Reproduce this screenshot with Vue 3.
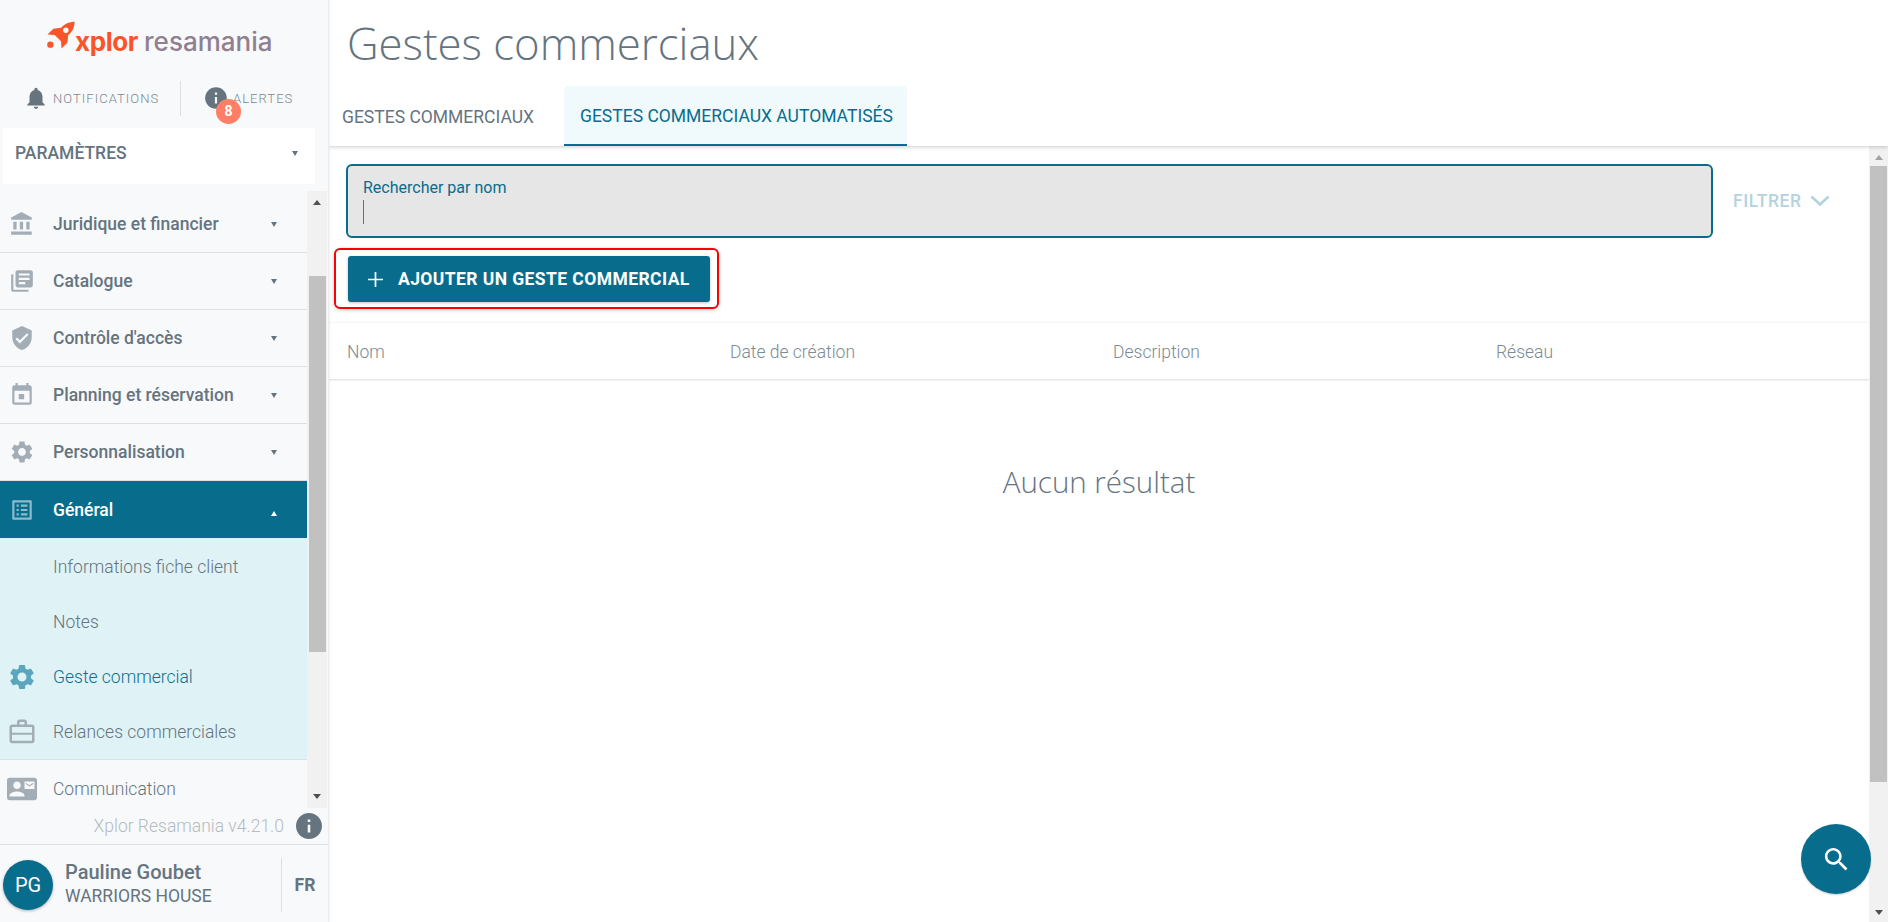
<script setup>
const icons = {
  bank: 'M4 10v7h3v-7H4zm6 0v7h3v-7h-3zM2 22h19v-3H2v3zm14-12v7h3v-7h-3zm-4.5-9L2 6v2h19V6l-9.5-5z',
  books: 'M4 6H2v14c0 1.1.9 2 2 2h14v-2H4V6zm16-4H8c-1.1 0-2 .9-2 2v12c0 1.1.9 2 2 2h12c1.1 0 2-.9 2-2V4c0-1.1-.9-2-2-2zm-1 9H9V9h10v2zm-4 4H9v-2h6v2zm4-8H9V5h10v2z',
  shield: 'M12 1L3 5v6c0 5.55 3.84 10.74 9 12 5.16-1.26 9-6.45 9-12V5l-9-4zm-2 16l-4-4 1.41-1.41L10 14.17l6.59-6.59L18 9l-8 8z',
  event: 'M14 11H9v5h5v-5zM16 1v2H8V1H6v2H5c-1.11 0-1.99.9-1.99 2L3 19c0 1.1.89 2 2 2h14c1.1 0 2-.9 2-2V5c0-1.1-.9-2-2-2h-1V1h-2zm3 18H5V8h14v11z',
  gear: 'M19.14,12.94c0.04-0.3,0.06-0.61,0.06-0.94c0-0.32-0.02-0.64-0.07-0.94l2.03-1.58c0.18-0.14,0.23-0.41,0.12-0.61 l-1.92-3.32c-0.12-0.22-0.37-0.29-0.59-0.22l-2.39,0.96c-0.5-0.38-1.03-0.7-1.62-0.94L14.4,2.81c-0.04-0.24-0.24-0.41-0.48-0.41 h-3.84c-0.24,0-0.43,0.17-0.47,0.41L9.25,5.35C8.66,5.59,8.12,5.92,7.63,6.29L5.24,5.33c-0.22-0.08-0.47,0-0.59,0.22L2.74,8.87 C2.62,9.08,2.66,9.34,2.86,9.48l2.03,1.58C4.84,11.36,4.8,11.69,4.8,12s0.02,0.64,0.07,0.94l-2.03,1.58 c-0.18,0.14-0.23,0.41-0.12,0.61l1.92,3.32c0.12,0.22,0.37,0.29,0.59,0.22l2.39-0.96c0.5,0.38,1.03,0.7,1.62,0.94l0.36,2.54 c0.05,0.24,0.24,0.41,0.48,0.41h3.84c0.24,0,0.44-0.17,0.47-0.41l0.36-2.54c0.59-0.24,1.13-0.56,1.62-0.94l2.39,0.96 c0.22,0.08,0.47,0,0.59-0.22l1.92-3.32c0.12-0.22,0.07-0.47-0.12-0.61L19.14,12.94z M12,15.6c-1.98,0-3.6-1.62-3.6-3.6 s1.62-3.6,3.6-3.6s3.6,1.62,3.6,3.6S13.98,15.6,12,15.6z',
  list: 'M19 5v14H5V5h14m1.1-2H3.9c-.5 0-.9.4-.9.9v16.2c0 .4.4.9.9.9h16.2c.4 0 .9-.5.9-.9V3.9c0-.5-.5-.9-.9-.9zM11 7h6v2h-6V7zm0 4h6v2h-6v-2zm0 4h6v2h-6zM7 7h2v2H7zm0 4h2v2H7zm0 4h2v2H7z',
  work: 'M14 6V4h-4v2h4zM4 8v11h16V8H4zm16-2c1.11 0 2 .89 2 2v11c0 1.11-.89 2-2 2H4c-1.11 0-2-.89-2-2l.01-11c0-1.11.88-2 1.99-2h4V4c0-1.11.89-2 2-2h4c1.11 0 2 .89 2 2v2h4zM3 12.6h18v1.6H3z',
  contact: 'M21 8V7l-3 2-3-2v1l3 2 3-2zm1-5H2C.9 3 0 3.9 0 5v14c0 1.1.9 2 2 2h20c1.1 0 1.99-.9 1.99-2L24 5c0-1.1-.9-2-2-2zM8 6c1.66 0 3 1.34 3 3s-1.34 3-3 3-3-1.34-3-3 1.34-3 3-3zm6 12H2v-1c0-2 4-3.1 6-3.1s6 1.1 6 3.1v1zm8-6h-8V6h8v6z',
  bell: 'M12 22c1.1 0 2-.9 2-2h-4c0 1.1.89 2 2 2zm6-6v-5c0-3.07-1.64-5.64-4.5-6.32V4c0-.83-.67-1.5-1.5-1.5s-1.5.67-1.5 1.5v.68C7.63 5.36 6 7.92 6 11v5l-2 2v1h16v-1l-2-2z',
  info: 'M12 2C6.48 2 2 6.48 2 12s4.48 10 10 10 10-4.48 10-10S17.52 2 12 2zm1 15h-2v-6h2v6zm0-8h-2V7h2v2z',
  search: 'M15.5 14h-.79l-.28-.27C15.41 12.59 16 11.11 16 9.5 16 5.91 13.09 3 9.5 3S3 5.91 3 9.5 5.91 16 9.5 16c1.61 0 3.09-.59 4.23-1.57l.27.28v.79l5 4.99L20.49 19l-4.99-5zm-6 0C7.01 14 5 11.99 5 9.5S7.01 5 9.5 5 14 7.01 14 9.5 11.99 14 9.5 14z'
}
const groups = [
  { label: 'Juridique et financier', icon: 'bank' },
  { label: 'Catalogue', icon: 'books' },
  { label: "Contrôle d'accès", icon: 'shield' },
  { label: 'Planning et réservation', icon: 'event' },
  { label: 'Personnalisation', icon: 'gear' }
]
const subItems = [
  { label: 'Informations fiche client' },
  { label: 'Notes' },
  { label: 'Geste commercial', icon: 'gear', current: true },
  { label: 'Relances commerciales', icon: 'work' }
]
const columns = ['Nom', 'Date de création', 'Description', 'Réseau']
</script>

<template>
  <div class="page">
    <aside class="sidebar">
      <div class="logo">
        <svg class="rocket" viewBox="0 0 30 30" width="29" height="29">
          <path fill="#fa5429" d="M28.5 0.5 C23 1 18 3 14.5 7 L6.5 8 L0.5 14 L8 14.5 L14.5 21 L15 28.5 L21 22.5 L22 14.5 C26.5 11 28.5 6 28.5 0.5 Z" />
          <circle cx="19.5" cy="9.5" r="2.8" fill="#f8f9fb" />
          <circle cx="3.5" cy="24.5" r="3.3" fill="#fa5429" />
        </svg>
        <span class="logo-x">xplor</span>
        <span class="logo-r">resamania</span>
      </div>

      <div class="alerts">
        <div class="alert-item notif">
          <svg class="a-icon" viewBox="0 0 24 24" width="26" height="26"><path :d="icons.bell" /></svg>
          <span>NOTIFICATIONS</span>
        </div>
        <div class="alert-item alertes">
          <svg class="a-icon" viewBox="0 0 24 24" width="26" height="26"><path :d="icons.info" /></svg>
          <span>ALERTES</span>
          <b class="badge">8</b>
        </div>
      </div>

      <div class="select">
        <span>PARAMÈTRES</span>
        <i class="caret down"></i>
      </div>

      <div class="menu-wrap">
        <nav class="menu">
          <div v-for="g in groups" :key="g.label" class="row">
            <span class="icon-cell"><svg viewBox="0 0 24 24" width="26" height="26"><path :d="icons[g.icon]" /></svg></span>
            <span class="row-label">{{ g.label }}</span>
            <i class="caret down"></i>
          </div>
          <div class="row active">
            <span class="icon-cell"><svg viewBox="0 0 24 24" width="26" height="26"><path :d="icons.list" /></svg></span>
            <span class="row-label">Général</span>
            <i class="caret up"></i>
          </div>
          <div class="sub">
            <div v-for="s in subItems" :key="s.label" class="sub-row" :class="{ current: s.current }">
              <span class="icon-cell"><svg v-if="s.icon" viewBox="0 0 24 24" width="30" height="30"><path :d="icons[s.icon]" /></svg></span>
              <span>{{ s.label }}</span>
            </div>
          </div>
          <div class="sub-row comm">
            <span class="icon-cell"><svg viewBox="0 0 24 24" width="30" height="30"><path :d="icons.contact" /></svg></span>
            <span>Communication</span>
          </div>
        </nav>
        <div class="scrollbar side-bar">
          <i class="arrow up"></i>
          <div class="thumb"></div>
          <i class="arrow dn"></i>
        </div>
      </div>

      <div class="version">
        <span>Xplor Resamania v4.21.0</span>
        <svg viewBox="2 2 20 20" width="26" height="26"><path :d="icons.info" /></svg>
      </div>

      <div class="user">
        <div class="avatar">PG</div>
        <div class="who">
          <strong>Pauline Goubet</strong>
          <span>WARRIORS HOUSE</span>
        </div>
        <div class="lang">FR</div>
      </div>
    </aside>

    <main class="main">
      <header class="head">
        <h1>Gestes commerciaux</h1>
        <div class="tabs">
          <div class="tab">GESTES COMMERCIAUX</div>
          <div class="tab selected">GESTES COMMERCIAUX AUTOMATISÉS</div>
        </div>
      </header>

      <div class="body">
        <div class="content">
          <div class="filters">
            <div class="search">
              <label>Rechercher par nom</label>
              <i class="text-caret"></i>
            </div>
            <div class="filter-btn">
              <span>FILTRER</span>
              <svg viewBox="0 0 20 12" width="20" height="12"><path d="M1.5 1.5 L10 9.5 L18.5 1.5" fill="none" stroke="currentColor" stroke-width="2.6" /></svg>
            </div>
          </div>
          <div class="add-wrap">
            <div class="outline">
              <button class="add">
                <svg viewBox="0 0 15 15" width="15" height="15"><path d="M7.5 0v15M0 7.5h15" stroke="#fff" stroke-width="1.7" /></svg>
                <span>AJOUTER UN GESTE COMMERCIAL</span>
              </button>
            </div>
          </div>
          <div class="thead">
            <div v-for="c in columns" :key="c" class="th">{{ c }}</div>
          </div>
          <p class="empty">Aucun résultat</p>
        </div>
        <div class="scrollbar main-bar">
          <i class="arrow up"></i>
          <div class="thumb"></div>
          <i class="arrow dn"></i>
        </div>
        <button class="fab">
          <svg viewBox="0 0 24 24" width="31" height="31"><path :d="icons.search" fill="#fff" /></svg>
        </button>
      </div>
    </main>
  </div>
</template>

<style>
html, body { margin: 0; height: 100%; overflow: hidden; background: #fff; }
</style>

<style scoped>
.page {
  display: flex;
  width: 1888px;
  height: 922px;
  overflow: hidden;
  font-family: Roboto, "Liberation Sans", sans-serif;
  color: #65747f;
}
.sidebar {
  width: 329px;
  flex: none;
  display: flex;
  flex-direction: column;
  background: #f8f9fb;
  border-right: 1px solid #ececec;
  box-sizing: border-box;
  box-shadow: 1px 0 2px rgba(0, 0, 0, .06);
  position: relative;
  z-index: 2;
}
.logo {
  height: 70px;
  display: flex;
  align-items: center;
  padding: 0 0 0 47px;
  box-sizing: border-box;
  font-family: Inter, "Open Sans", sans-serif;
  font-size: 26px;
}
.rocket { flex: none; }
.logo-x { color: #fa5429; font-weight: 700; margin-left: -1px; margin-top: 12px; letter-spacing: -.4px; }
.logo-r { color: #907f90; font-weight: 500; margin-left: 6px; margin-top: 12px; }
.alerts { height: 58px; display: flex; align-items: center; padding-bottom: 2px; box-sizing: border-box; }
.alert-item { display: flex; align-items: center; font-size: 13px; letter-spacing: 1.05px; color: #7c8992; font-weight: 300; height: 35px; position: relative; }
.a-icon { fill: #65747f; flex: none; }
.notif { width: 181px; padding-left: 23px; box-sizing: border-box; gap: 4px; border-right: 1px solid #dcdfe3; }
.alertes { padding-left: 22px; gap: 4px; }
.badge {
  position: absolute;
  left: 35px;
  top: 18px;
  width: 25px;
  height: 25px;
  border-radius: 50%;
  background: #ff7f66;
  color: #fff;
  font-size: 14px;
  font-weight: 700;
  letter-spacing: 0;
  display: flex;
  align-items: center;
  justify-content: center;
}
.select {
  margin: 0 13px 0 3px;
  height: 56px;
  background: #fff;
  display: flex;
  align-items: center;
  justify-content: space-between;
  padding: 0 17px 6px 12px;
  box-sizing: border-box;
  font-size: 17.5px;
  font-weight: 500;
}
.caret { width: 0; height: 0; border-left: 3.5px solid transparent; border-right: 3.5px solid transparent; display: block; flex: none; }
.caret.down { border-top: 5px solid #65747f; }
.caret.up { border-bottom: 5px solid #fff; margin-top: 7px; }
.menu-wrap { height: 617px; margin-top: 7px; display: flex; overflow: hidden; }
.menu { width: 307px; flex: none; padding-top: 5px; box-sizing: border-box; overflow: hidden; }
.row {
  height: 57px;
  display: flex;
  align-items: center;
  padding-right: 30px;
  box-sizing: border-box;
  border-bottom: 1px solid #dcdfe3;
  font-size: 17.5px;
  font-weight: 500;
}
.row-label { flex: 1; }
.icon-cell { width: 53px; flex: none; display: flex; justify-content: center; padding-right: 10px; box-sizing: border-box; }
.icon-cell svg { fill: #a2adb5; display: block; }
.row.active { background: #086d8d; color: #fff; border-bottom: none; }
.row.active svg { fill: #8cbccb; }
.sub { background: #dff2f6; border-bottom: 1px solid #dcdfe3; padding-top: 1px; }
.sub-row { height: 55px; display: flex; align-items: center; font-size: 17.5px; font-weight: 300; color: #65747f; white-space: nowrap; }
.sub-row.current { color: #0a7090; }
.sub-row.current svg { fill: #5ba6bf; }
.comm { margin-top: 1px; }
.scrollbar { background: #f1f1f1; display: flex; flex-direction: column; align-items: center; flex: none; }
.side-bar { width: 20px; }
.thumb { background: #c1c1c1; width: 17px; }
.arrow { width: 0; height: 0; border-left: 4.5px solid transparent; border-right: 4.5px solid transparent; display: block; flex: none; }
.arrow.up { border-bottom: 5px solid #505050; }
.arrow.dn { border-top: 5px solid #505050; }
.side-bar .arrow.up { margin: 9px 0 71px; }
.side-bar .thumb { height: 376px; }
.side-bar .arrow.dn { margin-top: 142px; }
.version {
  height: 37px;
  display: flex;
  align-items: center;
  justify-content: flex-end;
  padding-right: 6px;
  gap: 12px;
  box-sizing: border-box;
  border-bottom: 1px solid #dcdfe3;
  font-size: 17.5px;
  font-weight: 300;
  color: #b4bbc1;
}
.version svg { fill: #65747f; }
.user { flex: 1; display: flex; align-items: center; padding: 3px 0 0 3px; }
.avatar {
  width: 50px;
  height: 50px;
  border-radius: 50%;
  background: #086d8d;
  color: #fff;
  font-size: 20px;
  display: flex;
  align-items: center;
  justify-content: center;
  box-shadow: 0 1px 3px rgba(0, 0, 0, .3);
  flex: none;
}
.who { margin: -3px 0 0 12px; width: 216px; flex: none; display: flex; flex-direction: column; line-height: 24px; white-space: nowrap; }
.who strong { font-size: 20px; font-weight: 500; }
.who span { font-size: 17.5px; }
.lang { border-left: 1px solid #dcdfe3; height: 54px; flex: 1; display: flex; align-items: center; justify-content: center; font-weight: 700; font-size: 17.5px; }
.main { flex: 1; min-width: 0; display: flex; flex-direction: column; }
.head { height: 146px; flex: none; box-shadow: 0 1px 4px rgba(0, 0, 0, .2); position: relative; z-index: 1; background: #fff; box-sizing: border-box; padding-left: 18px; }
h1 {
  margin: 0;
  height: 86px;
  line-height: 86px;
  font-family: "Open Sans", sans-serif;
  font-weight: 300;
  font-size: 43.7px;
  color: #65747f;
}
.tabs { display: flex; height: 60px; margin-left: -5px; }
.tab { display: flex; align-items: center; padding-top: 2px; font-size: 17.5px; color: #65747f; font-weight: 400; box-sizing: border-box; white-space: nowrap; }
.tab:first-child { width: 222px; }
.tab.selected { width: 343px; padding-left: 16px; background: #f0f9fb; color: #086d8d; border-bottom: 2px solid #086d8d; border-radius: 4px 4px 0 0; }
.body { flex: 1; display: flex; position: relative; min-height: 0; }
.content { flex: 1; min-width: 0; }
.filters { display: flex; align-items: center; padding: 18px 0 0 17px; }
.search {
  width: 1367px;
  height: 74px;
  box-sizing: border-box;
  border: 2px solid #086d8d;
  border-radius: 6px;
  background: #e6e6e6;
  padding: 12px 15px 0;
  display: flex;
  flex-direction: column;
}
.search label { font-size: 16px; line-height: 20px; color: #086d8d; font-weight: 400; }
.text-caret { display: block; width: 1px; height: 24px; background: #65747f; margin-top: 2px; }
.filter-btn { margin-left: 20px; display: flex; align-items: center; gap: 8px; color: #b3d3de; font-size: 17.5px; font-weight: 500; letter-spacing: .6px; }
.add-wrap { padding: 10px 0 0 5px; }
.outline { display: inline-block; border: 2px solid #f00; border-radius: 6px; padding: 6px 7px 5px 12px; box-shadow: 0 1px 4px rgba(0, 0, 0, .2); background: #fff; }
.add {
  width: 362px;
  height: 46px;
  border: 0;
  border-radius: 3px;
  background: #086d8d;
  color: #fff;
  display: flex;
  align-items: center;
  padding: 0 0 0 20px;
  gap: 15px;
  font-family: Roboto, sans-serif;
  font-weight: 700;
  font-size: 17.5px;
  letter-spacing: .42px;
  white-space: nowrap;
  box-shadow: 0 1px 3px rgba(0, 0, 0, .25);
}
.thead {
  height: 57px;
  margin-top: 13px;
  display: grid;
  grid-template-columns: repeat(4, 383px);
  align-items: center;
  padding: 2px 0 0 18px;
  border-top: 1px solid #f5f5f5;
  box-shadow: 0 1px 2px rgba(0, 0, 0, .15);
  box-sizing: border-box;
  font-size: 17.5px;
  font-weight: 300;
  color: #7b8a94;
}
.empty {
  margin: 0;
  padding-top: 83px;
  text-align: center;
  font-family: "Open Sans", sans-serif;
  font-weight: 300;
  font-size: 29.5px;
  line-height: 40px;
  color: #65747f;
}
.main-bar { width: 19px; }
.main-bar .arrow.up { margin: 9px 0 6px; border-bottom-color: #a3a3a3; }
.main-bar .thumb { height: 616px; }
.main-bar .arrow.dn { margin-top: 128px; }
.fab {
  position: absolute;
  right: 17px;
  bottom: 28px;
  width: 70px;
  height: 70px;
  border: 0;
  border-radius: 50%;
  background: #086d8d;
  display: flex;
  align-items: center;
  justify-content: center;
  box-shadow: 0 1px 2px rgba(0, 0, 0, .2);
}
</style>
